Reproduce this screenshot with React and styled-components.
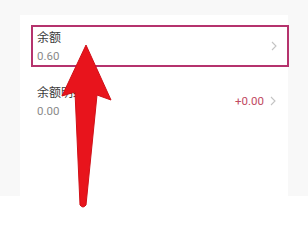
import React from "react";
import styled, { createGlobalStyle } from "styled-components";

const GlobalStyle = createGlobalStyle`
  html, body {
    margin: 0;
    padding: 0;
    background: #ffffff;
    font-family: "Noto Sans CJK SC", "Noto Sans", sans-serif;
  }
`;

const Page = styled.div`
  position: relative;
  width: 308px;
  height: 242px;
  overflow: hidden;
  background: #ffffff;
`;

const Backdrop = styled.div`
  height: 196px;
  background: #f8f8f8;
  padding: 15px 20px 0 20px;
  box-sizing: border-box;
`;

const Card = styled.div`
  height: 100%;
  background: #ffffff;
  display: flex;
  flex-direction: column;
  padding-top: 10px;
  box-sizing: border-box;
`;

const Row = styled.div`
  display: flex;
  align-items: center;
  height: ${(p) => (p.$marked ? "42px" : "40px")};
  margin-left: 11px;
  margin-right: ${(p) => (p.$marked ? "-1px" : "0")};
  margin-top: ${(p) => (p.$marked ? "0" : "14px")};
  padding-left: 4px;
  padding-right: 10px;
  box-sizing: border-box;
  border: 2px solid ${(p) => (p.$marked ? "#b5336d" : "transparent")};
`;

const Texts = styled.div`
  display: flex;
  flex-direction: column;
  gap: 5px;
  flex: 1;
`;

const Label = styled.div`
  font-size: 12px;
  line-height: 14px;
  color: #3a3a3a;
`;

const Amount = styled.div`
  font-size: 11.5px;
  line-height: 14px;
  color: #8a8a8a;
  font-family: "Roboto", "Noto Sans", sans-serif;
`;

const Change = styled.div`
  font-size: 11.5px;
  color: #c14a62;
  font-family: "Roboto", "Noto Sans", sans-serif;
  margin-right: 6px;
`;

const Chevron = styled.svg`
  width: 6px;
  height: 10px;
  flex-shrink: 0;
`;

const Arrow = styled.svg`
  position: absolute;
  left: 0;
  top: 0;
  width: 308px;
  height: 242px;
  pointer-events: none;
`;

const ChevronIcon = () => (
  <Chevron viewBox="0 0 6 10">
    <path d="M1 1l4 4-4 4" fill="none" stroke="#c4c4c4" strokeWidth="1.1" />
  </Chevron>
);

export default function App() {
  return (
    <Page>
      <GlobalStyle />
      <Backdrop>
        <Card>
          <Row $marked>
            <Texts>
              <Label>余额</Label>
              <Amount>0.60</Amount>
            </Texts>
            <ChevronIcon />
          </Row>
          <Row>
            <Texts>
              <Label>余额明细</Label>
              <Amount>0.00</Amount>
            </Texts>
            <Change>+0.00</Change>
            <ChevronIcon />
          </Row>
        </Card>
      </Backdrop>
      <Arrow viewBox="0 0 308 242">
        <path
          d="M86 45 L111 100 L97 95 L86 205 Q83 209 80 205 L75 92 L62 96 Z"
          fill="#e8141c"
          stroke="#d01018"
          strokeWidth="1"
          strokeLinejoin="round"
        />
      </Arrow>
    </Page>
  );
}
